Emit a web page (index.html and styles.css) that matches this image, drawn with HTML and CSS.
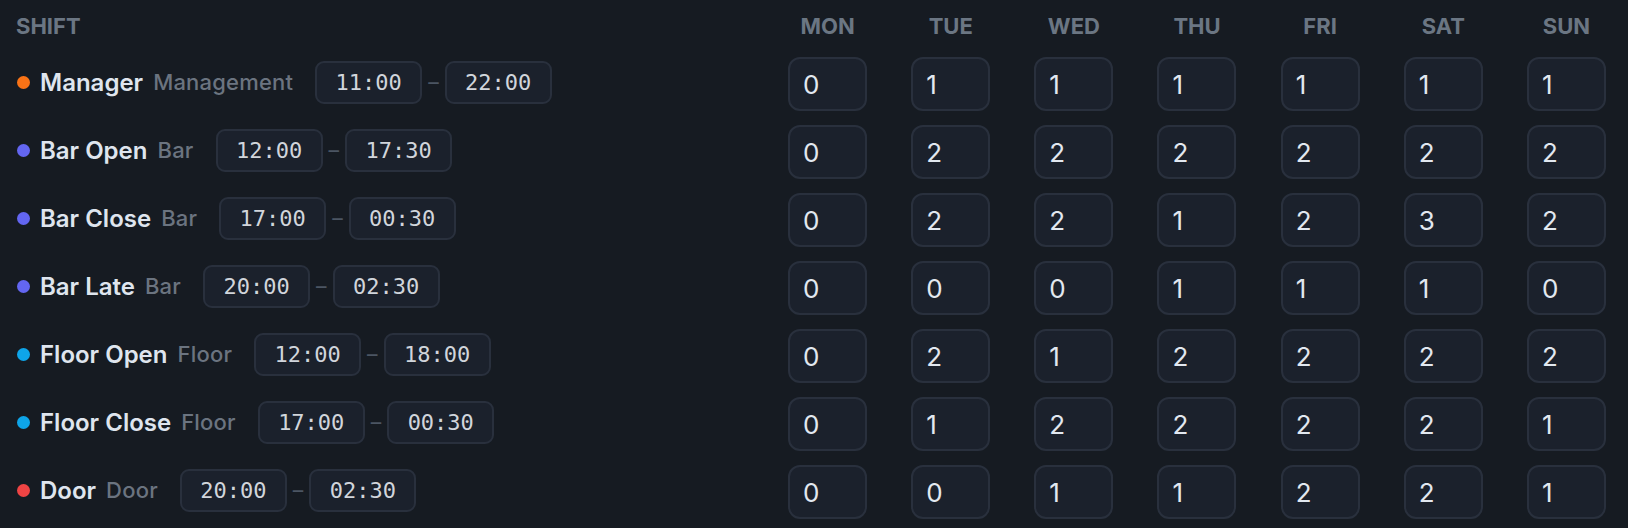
FILE: index.html
```html
<!DOCTYPE html>
<html lang="en">
<head>
  <meta charset="UTF-8" />
  <meta name="viewport" content="width=device-width, initial-scale=1.0"/>
  <title>Weekly Staffing</title>
  <link rel="stylesheet" href="styles.css">
</head>
<body>

  <table class="roster">
    <colgroup>
      <col class="col-shift">
      <col span="7">
    </colgroup>
    <thead>
      <tr>
        <th class="th-shift">Shift</th>
        <th>Mon</th>
        <th>Tue</th>
        <th>Wed</th>
        <th>Thu</th>
        <th>Fri</th>
        <th>Sat</th>
        <th>Sun</th>
      </tr>
    </thead>
    <tbody>
      <tr>
        <td class="shift-cell">
          <div class="shift">
            <span class="dot dot-orange"></span>
            <span class="shift-name">Manager</span>
            <span class="shift-dept">Management</span>
            <div class="times">
              <input class="time" type="text" value="11:00">
              <span class="dash">–</span>
              <input class="time" type="text" value="22:00">
            </div>
          </div>
        </td>
        <td><input class="count" type="text" value="0"></td>
        <td><input class="count" type="text" value="1"></td>
        <td><input class="count" type="text" value="1"></td>
        <td><input class="count" type="text" value="1"></td>
        <td><input class="count" type="text" value="1"></td>
        <td><input class="count" type="text" value="1"></td>
        <td><input class="count" type="text" value="1"></td>
      </tr>
      <tr>
        <td class="shift-cell">
          <div class="shift">
            <span class="dot dot-indigo"></span>
            <span class="shift-name">Bar Open</span>
            <span class="shift-dept">Bar</span>
            <div class="times">
              <input class="time" type="text" value="12:00">
              <span class="dash">–</span>
              <input class="time" type="text" value="17:30">
            </div>
          </div>
        </td>
        <td><input class="count" type="text" value="0"></td>
        <td><input class="count" type="text" value="2"></td>
        <td><input class="count" type="text" value="2"></td>
        <td><input class="count" type="text" value="2"></td>
        <td><input class="count" type="text" value="2"></td>
        <td><input class="count" type="text" value="2"></td>
        <td><input class="count" type="text" value="2"></td>
      </tr>
      <tr>
        <td class="shift-cell">
          <div class="shift">
            <span class="dot dot-indigo"></span>
            <span class="shift-name">Bar Close</span>
            <span class="shift-dept">Bar</span>
            <div class="times">
              <input class="time" type="text" value="17:00">
              <span class="dash">–</span>
              <input class="time" type="text" value="00:30">
            </div>
          </div>
        </td>
        <td><input class="count" type="text" value="0"></td>
        <td><input class="count" type="text" value="2"></td>
        <td><input class="count" type="text" value="2"></td>
        <td><input class="count" type="text" value="1"></td>
        <td><input class="count" type="text" value="2"></td>
        <td><input class="count" type="text" value="3"></td>
        <td><input class="count" type="text" value="2"></td>
      </tr>
      <tr>
        <td class="shift-cell">
          <div class="shift">
            <span class="dot dot-indigo"></span>
            <span class="shift-name">Bar Late</span>
            <span class="shift-dept">Bar</span>
            <div class="times">
              <input class="time" type="text" value="20:00">
              <span class="dash">–</span>
              <input class="time" type="text" value="02:30">
            </div>
          </div>
        </td>
        <td><input class="count" type="text" value="0"></td>
        <td><input class="count" type="text" value="0"></td>
        <td><input class="count" type="text" value="0"></td>
        <td><input class="count" type="text" value="1"></td>
        <td><input class="count" type="text" value="1"></td>
        <td><input class="count" type="text" value="1"></td>
        <td><input class="count" type="text" value="0"></td>
      </tr>
      <tr>
        <td class="shift-cell">
          <div class="shift">
            <span class="dot dot-sky"></span>
            <span class="shift-name">Floor Open</span>
            <span class="shift-dept">Floor</span>
            <div class="times">
              <input class="time" type="text" value="12:00">
              <span class="dash">–</span>
              <input class="time" type="text" value="18:00">
            </div>
          </div>
        </td>
        <td><input class="count" type="text" value="0"></td>
        <td><input class="count" type="text" value="2"></td>
        <td><input class="count" type="text" value="1"></td>
        <td><input class="count" type="text" value="2"></td>
        <td><input class="count" type="text" value="2"></td>
        <td><input class="count" type="text" value="2"></td>
        <td><input class="count" type="text" value="2"></td>
      </tr>
      <tr>
        <td class="shift-cell">
          <div class="shift">
            <span class="dot dot-sky"></span>
            <span class="shift-name">Floor Close</span>
            <span class="shift-dept">Floor</span>
            <div class="times">
              <input class="time" type="text" value="17:00">
              <span class="dash">–</span>
              <input class="time" type="text" value="00:30">
            </div>
          </div>
        </td>
        <td><input class="count" type="text" value="0"></td>
        <td><input class="count" type="text" value="1"></td>
        <td><input class="count" type="text" value="2"></td>
        <td><input class="count" type="text" value="2"></td>
        <td><input class="count" type="text" value="2"></td>
        <td><input class="count" type="text" value="2"></td>
        <td><input class="count" type="text" value="1"></td>
      </tr>
      <tr>
        <td class="shift-cell">
          <div class="shift">
            <span class="dot dot-red"></span>
            <span class="shift-name">Door</span>
            <span class="shift-dept">Door</span>
            <div class="times">
              <input class="time" type="text" value="20:00">
              <span class="dash">–</span>
              <input class="time" type="text" value="02:30">
            </div>
          </div>
        </td>
        <td><input class="count" type="text" value="0"></td>
        <td><input class="count" type="text" value="0"></td>
        <td><input class="count" type="text" value="1"></td>
        <td><input class="count" type="text" value="1"></td>
        <td><input class="count" type="text" value="2"></td>
        <td><input class="count" type="text" value="2"></td>
        <td><input class="count" type="text" value="1"></td>
      </tr>
    </tbody>
  </table>

</body>
</html>
```

FILE: styles.css
```css
/* Dark staffing grid */
body {
  margin: 0;
  padding: 0;
  background: #161b22;
  font-family: Inter, 'Noto Sans', sans-serif;
  color: #e2e8f0;
}

.roster {
  width: 100%;
  border-collapse: collapse;
  table-layout: fixed;
}

.col-shift {
  width: 766px;
}

th {
  padding: 13px 0 11px;
  line-height: 26px;
  font-size: 22px;
  font-weight: 700;
  text-transform: uppercase;
  color: #6b7683;
  text-align: center;
}

.th-shift {
  text-align: left;
  padding-left: 16px;
}

td {
  padding: 7px 0;
  text-align: center;
  vertical-align: middle;
}

.shift-cell {
  text-align: left;
  padding: 5px 0 9px 17px;
}

.shift {
  display: flex;
  align-items: center;
  gap: 9px;
}

.dot {
  width: 13px;
  height: 13px;
  border-radius: 50%;
  flex-shrink: 0;
  margin-right: 1px;
}

.dot-orange { background: #f97316; }
.dot-indigo { background: #6366f1; }
.dot-sky { background: #0ea5e9; }
.dot-red { background: #ef4444; }

.shift-name {
  font-size: 24px;
  font-weight: 600;
  color: #dfe5ee;
}

.shift-dept {
  font-size: 22px;
  font-weight: 500;
  letter-spacing: 0.2px;
  color: #6b7480;
  margin-left: 1px;
}

.times {
  display: flex;
  align-items: center;
  gap: 6px;
  margin-left: 13px;
}

.dash {
  font-size: 21px;
  color: #4b5563;
}

input {
  box-sizing: border-box;
  background: #1b212c;
  border: 2px solid #29303d;
  outline: none;
  margin: 0;
}

.time {
  width: 107px;
  height: 43px;
  border-radius: 9px;
  padding: 0;
  text-align: center;
  font-family: 'DejaVu Sans Mono', 'Liberation Mono', monospace;
  font-size: 22px;
  color: #d1d5db;
}

.count {
  width: 79px;
  height: 54px;
  border-radius: 12px;
  padding: 0 13px;
  font-family: Inter, 'Noto Sans', sans-serif;
  font-size: 26px;
  font-weight: 400;
  color: #e2e8f0;
}
```
